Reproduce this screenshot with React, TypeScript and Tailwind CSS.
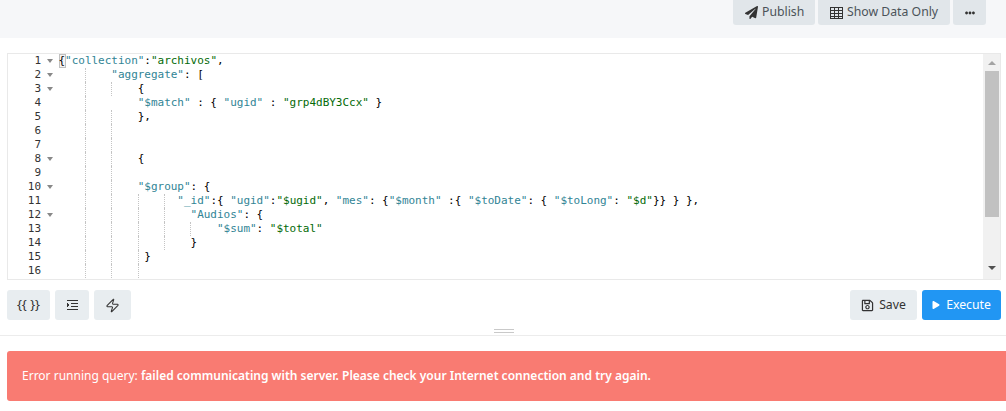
import React from 'react';
import { FaEllipsisH, FaPaperPlane, FaPlay, FaRegSave } from 'react-icons/fa';
import { Zap } from 'lucide-react';

type Token = { t: string; c?: 'k' | 's' };

const k = (t: string): Token => ({ t, c: 'k' });
const s = (t: string): Token => ({ t, c: 's' });
const p = (t: string): Token => ({ t });

interface CodeLine {
  n: number;
  fold?: boolean;
  guides: number[];
  indent: number;
  tokens: Token[];
}

const lines: CodeLine[] = [
  { n: 1, fold: true, guides: [], indent: 0, tokens: [p('{'), k('"collection"'), p(':'), s('"archivos"'), p(',')] },
  { n: 2, fold: true, guides: [0], indent: 8, tokens: [k('"aggregate"'), p(': [')] },
  { n: 3, fold: true, guides: [0, 1], indent: 12, tokens: [p('{')] },
  { n: 4, guides: [0], indent: 12, tokens: [k('"$match"'), p(' : { '), k('"ugid"'), p(' : '), s('"grp4dBY3Ccx"'), p(' }')] },
  { n: 5, guides: [0, 1], indent: 12, tokens: [p('},')] },
  { n: 6, guides: [0, 1], indent: 0, tokens: [] },
  { n: 7, guides: [0, 1], indent: 0, tokens: [] },
  { n: 8, fold: true, guides: [0, 1], indent: 12, tokens: [p('{')] },
  { n: 9, guides: [0, 1], indent: 0, tokens: [] },
  { n: 10, fold: true, guides: [0, 1], indent: 12, tokens: [k('"$group"'), p(': {')] },
  {
    n: 11,
    guides: [0, 1, 2, 3],
    indent: 18,
    tokens: [
      k('"_id"'), p(':{ '), k('"ugid"'), p(':'), s('"$ugid"'), p(', '), k('"mes"'), p(': {'), k('"$month"'), p(' :{ '),
      k('"$toDate"'), p(': { '), k('"$toLong"'), p(': '), s('"$d"'), p('}} } },'),
    ],
  },
  { n: 12, fold: true, guides: [0, 1, 2, 3], indent: 20, tokens: [k('"Audios"'), p(': {')] },
  { n: 13, guides: [0, 1, 2, 3, 4], indent: 24, tokens: [k('"$sum"'), p(': '), s('"$total"')] },
  { n: 14, guides: [0, 1, 2, 3], indent: 20, tokens: [p('}')] },
  { n: 15, guides: [0, 1, 2], indent: 13, tokens: [p('}')] },
  { n: 16, guides: [0, 1, 2], indent: 0, tokens: [] },
];

const guideLeft = ['left-[26px]', 'left-[52px]', 'left-[79px]', 'left-[105px]', 'left-[131px]'];

const TopButton = ({ className, children }: { className: string; children: React.ReactNode }) => (
  <button className={`flex h-[25px] items-center gap-1 rounded-b-[3px] bg-[#e1e6ea] pl-3 text-[12.25px] text-[#4b5359] ${className}`}>
    {children}
  </button>
);

const ToolButton = ({ className, children }: { className: string; children: React.ReactNode }) => (
  <button className={`flex h-[30px] items-center justify-center rounded-[3px] bg-[#e8edf0] text-[#333] ${className}`}>
    {children}
  </button>
);

export default function App() {
  return (
    <div className="h-[411px] w-[1006px] overflow-hidden bg-white font-['Noto_Sans',sans-serif] text-[12.25px]">
      <div className="flex h-[38px] items-start justify-end gap-[3px] bg-[#f6f7f9] pr-5">
        <TopButton className="w-[82px]">
          <FaPaperPlane className="text-[13px] text-[#333]" />
          Publish
        </TopButton>
        <TopButton className="w-[132px]">
          <svg width="13" height="12" viewBox="0 0 13 12" fill="none" stroke="#333" strokeWidth="1" shapeRendering="crispEdges">
            <rect x="0.5" y="0.5" width="12" height="11" />
            <path d="M0 3.5h13M0 6.5h13M0 9h13M4.5 0v12M8.5 0v12" />
          </svg>
          Show Data Only
        </TopButton>
        <TopButton className="w-[33px]">
          <FaEllipsisH className="text-[10px] text-[#333]" />
        </TopButton>
      </div>

      <div className="relative ml-[7px] mr-[5px] mt-[15px] flex h-[227px] overflow-hidden border border-[#e9e9e9] font-['DejaVu_Sans_Mono',monospace] text-[11px] leading-[14px] tracking-[-0.02px]">
        <div className="w-[50px] shrink-0 text-[#333]">
          {lines.map((l) => (
            <div key={l.n} className="relative h-[14px] pr-[17px] text-right">
              {l.n}
              {l.fold && (
                <span className="absolute right-[5px] top-[5px] h-0 w-0 border-x-[3px] border-t-[4px] border-x-transparent border-t-[#888]" />
              )}
            </div>
          ))}
        </div>
        <div className="min-w-0 flex-1 whitespace-pre pl-[0.5px] text-black">
          {lines.map((l) => (
            <div key={l.n} className="relative h-[14px]">
              {l.guides.map((g) => (
                <span key={g} className={`absolute top-0 h-[14px] border-l border-dotted border-[#c4c4c4] ${guideLeft[g]}`} />
              ))}
              {l.n === 1 && <span className="absolute left-0 top-0 h-[14px] w-[7px] border border-[#c0c0c0] bg-[#f4f4f4]" />}
              <span className="relative">
                {' '.repeat(l.indent)}
                {l.tokens.map((tk, i) => (
                  <span key={i} className={tk.c === 'k' ? 'text-[#318495]' : tk.c === 's' ? 'text-[#036a07]' : ''}>
                    {tk.t}
                  </span>
                ))}
              </span>
            </div>
          ))}
        </div>
        <div className="flex w-[17px] shrink-0 flex-col items-center bg-[#f1f1f1]">
          <span className="mt-[7px] h-0 w-0 border-x-[4px] border-b-[4px] border-x-transparent border-b-[#a3a3a3]" />
          <span className="mt-[6px] h-[146px] w-[14px] bg-[#c1c1c1]" />
          <span className="mt-[49px] h-0 w-0 border-x-[4px] border-t-[4px] border-x-transparent border-t-[#505050]" />
        </div>
      </div>

      <div className="ml-[7px] mr-[5px] mt-[10px] flex items-center">
        <ToolButton className="w-[43px] text-[13px]">{'{{ }}'}</ToolButton>
        <ToolButton className="ml-[5px] w-[34px]">
          <svg width="11" height="10" viewBox="0 0 11 10" fill="#333" shapeRendering="crispEdges">
            <path d="M0 0h11v1H0zM4 3h7v1H4zM4 6h7v1H4zM0 9h11v1H0z" />
            <path d="M0 3l3 2-3 2z" />
          </svg>
        </ToolButton>
        <ToolButton className="ml-[5px] w-[37px]">
          <Zap size={15} strokeWidth={1.7} />
        </ToolButton>
        <div className="flex-1" />
        <ToolButton className="w-[67px] gap-[5px] text-[#4b5359]">
          <FaRegSave className="text-[13px] text-[#333]" />
          Save
        </ToolButton>
        <button className="ml-[5px] flex h-[30px] w-[79px] items-center justify-center gap-[6px] rounded-[3px] bg-[#2196f3] text-white">
          <FaPlay className="text-[8px]" />
          Execute
        </button>
      </div>

      <div className="relative mt-[15px] h-px bg-[#ececec]">
        <div className="absolute left-[494px] top-[-6px] h-[4px] w-[20px] border-y border-[#c9c9c9]" />
      </div>

      <div className="ml-[7px] mt-[15px] flex h-[50px] items-center rounded-l-[3px] bg-[#f97b72] pl-[15px] text-[12px] text-white">
        <span>
          Error running query: <span className="font-semibold">failed communicating with server. Please check your Internet connection and try again.</span>
        </span>
      </div>
    </div>
  );
}
